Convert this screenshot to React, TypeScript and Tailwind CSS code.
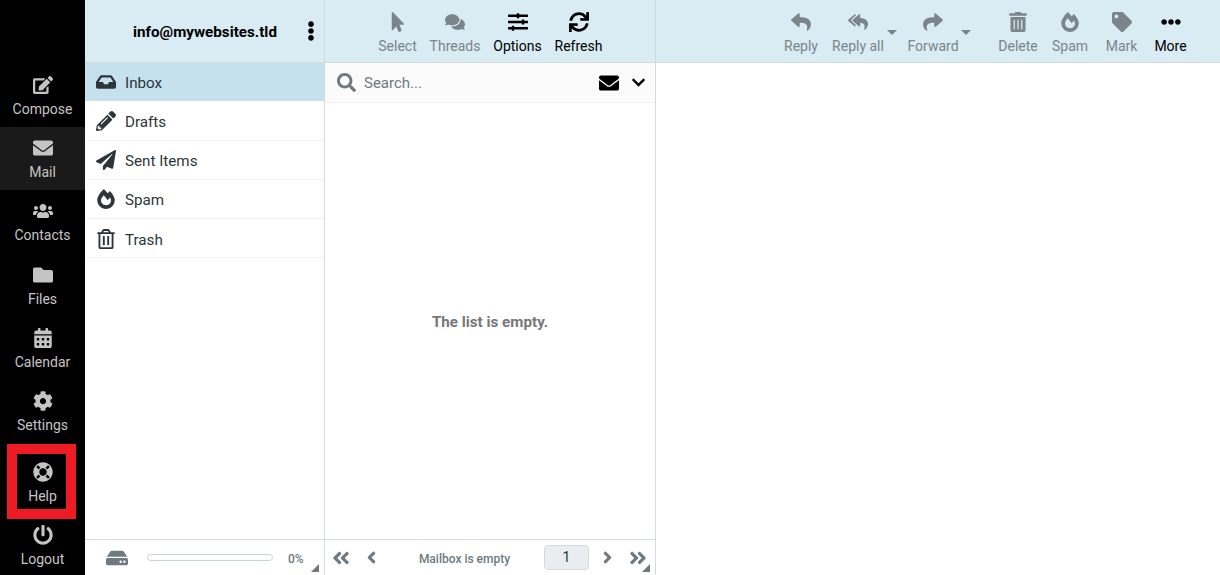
import type { ReactNode } from "react";
import type { IconType } from "react-icons";
import {
  FaAngleDoubleLeft,
  FaAngleDoubleRight,
  FaAngleLeft,
  FaAngleRight,
  FaCalendarAlt,
  FaChevronDown,
  FaCog,
  FaComments,
  FaEdit,
  FaEllipsisH,
  FaEllipsisV,
  FaEnvelope,
  FaFireAlt,
  FaFolder,
  FaHdd,
  FaInbox,
  FaLifeRing,
  FaMousePointer,
  FaPaperPlane,
  FaPencilAlt,
  FaPowerOff,
  FaRegTrashAlt,
  FaReply,
  FaReplyAll,
  FaSearch,
  FaShare,
  FaSlidersH,
  FaSync,
  FaTag,
  FaTrashAlt,
  FaUsers,
} from "react-icons/fa";

const topNav: { label: string; icon: IconType; active?: boolean }[] = [
  { label: "Compose", icon: FaEdit },
  { label: "Mail", icon: FaEnvelope, active: true },
  { label: "Contacts", icon: FaUsers },
  { label: "Files", icon: FaFolder },
  { label: "Calendar", icon: FaCalendarAlt },
  { label: "Settings", icon: FaCog },
];

const folders: { label: string; icon: IconType; active?: boolean }[] = [
  { label: "Inbox", icon: FaInbox, active: true },
  { label: "Drafts", icon: FaPencilAlt },
  { label: "Sent Items", icon: FaPaperPlane },
  { label: "Spam", icon: FaFireAlt },
  { label: "Trash", icon: FaRegTrashAlt },
];

const NavItem = ({
  label,
  icon: Icon,
  active,
}: {
  label: string;
  icon: IconType;
  active?: boolean;
}) => (
  <div
    className={`h-[63.4px] shrink-0 flex flex-col items-center pt-[11px] ${
      active ? "bg-[#1a1a1a]" : ""
    }`}
  >
    <Icon className="h-[20px] w-auto text-[#c4c4c4]" />
    <span className="mt-[4px] text-[14px] leading-[20px] text-[#c4c4c4]">
      {label}
    </span>
  </div>
);

const ToolButton = ({
  label,
  icon: Icon,
  dark,
  width,
  caret,
}: {
  label: string;
  icon: IconType;
  dark?: boolean;
  width: string;
  caret?: boolean;
}) => (
  <div
    className={`relative h-[62px] shrink-0 flex flex-col items-center pt-[12px] ${width} ${
      dark ? "text-black" : "text-[#7b8589]"
    }`}
  >
    <Icon className="h-[20px] w-auto" />
    <span className="mt-[4px] text-[14px] leading-[20px] whitespace-nowrap">
      {label}
    </span>
    {caret && (
      <span className="absolute right-[-13px] top-[30px] border-x-[5px] border-t-[5px] border-x-transparent border-t-[#7b8589]" />
    )}
  </div>
);

const ResizeHandle = () => (
  <svg
    viewBox="0 0 8 8"
    className="absolute right-[5px] bottom-[3px] w-[8px] h-[8px] text-[#777]"
  >
    <path d="M8 0V8H0Z" fill="currentColor" />
  </svg>
);

const Header = ({ children }: { children: ReactNode }) => (
  <div className="h-[63px] shrink-0 bg-[#d9ebf3] border-b border-[#d4dbde] flex items-start">
    {children}
  </div>
);

export default function App() {
  return (
    <div
      className="relative flex h-[575px] w-[1220px] overflow-hidden bg-white"
      style={{ fontFamily: "Roboto, sans-serif" }}
    >
      {/* App menu */}
      <div className="w-[85px] shrink-0 bg-black flex flex-col pt-[63.5px]">
        {topNav.map((item) => (
          <NavItem key={item.label} {...item} />
        ))}
        <div className="mt-[7px] relative">
          <NavItem label="Help" icon={FaLifeRing} />
          <div className="absolute left-[7px] top-[-7px] w-[69px] h-[75px] border-[10px] border-[#ed1c24]" />
        </div>
        <NavItem label="Logout" icon={FaPowerOff} />
      </div>

      {/* Folder list */}
      <div className="w-[240px] shrink-0 border-r border-[#d4dbde] flex flex-col">
        <Header>
          <div className="flex-1 h-full flex items-center">
            <span className="ml-[48px] pt-[2px] text-[15.2px] font-bold text-black">
              info@mywebsites.tld
            </span>
            <FaEllipsisV className="ml-[24px] h-[20px] w-auto text-black" />
          </div>
        </Header>
        <div className="flex-1">
          {folders.map(({ label, icon: Icon, active }) => (
            <div
              key={label}
              className={`h-[39px] last:pt-[2px] flex items-center pl-[10px] border-b ${
                active ? "bg-[#c5e1ee] border-white" : "border-[#f0f2f3]"
              }`}
            >
              <span className="w-[22px] flex justify-center">
                <Icon className="h-[20px] w-auto shrink-0 text-[#2c363a]" />
              </span>
              <span className="ml-[8px] pt-[2px] text-[15.2px] text-[#2c363a]">{label}</span>
            </div>
          ))}
        </div>
        <div className="relative h-[36px] shrink-0 border-t border-[#d4dbde] flex items-center">
          <FaHdd className="ml-[21px] w-[22px] h-[22px] text-[#6e7a80]" />
          <div className="ml-[19px] w-[126px] h-[7px] rounded-full border border-[#c8d3d8]" />
          <span className="ml-[15px] pt-[2px] text-[12px] font-medium text-[#6e7a80]">0%</span>
          <ResizeHandle />
        </div>
      </div>

      {/* Message list */}
      <div className="w-[331px] shrink-0 border-r border-[#d4dbde] flex flex-col">
        <Header>
          <div className="flex pl-[53px] gap-[13px]">
            <ToolButton label="Select" icon={FaMousePointer} width="w-[39px]" />
            <ToolButton label="Threads" icon={FaComments} width="w-[50px]" />
            <ToolButton label="Options" icon={FaSlidersH} dark width="w-[49px]" />
            <ToolButton label="Refresh" icon={FaSync} dark width="w-[47px]" />
          </div>
        </Header>
        <div className="h-[40px] shrink-0 bg-[#fbfbfb] border-b border-[#f0f2f3] flex items-center pl-[12px]">
          <FaSearch className="w-[19px] h-[19px] text-[#6e7a80]" />
          <span className="ml-[8px] pt-[2px] flex-1 text-[15px] text-[#6e7a80]">Search...</span>
          <FaEnvelope className="w-[20px] h-[20px] text-black" />
          <FaChevronDown className="ml-[12px] mr-[9px] h-[15px] w-auto text-black" />
        </div>
        <div className="flex-1 flex items-center justify-center pt-[2px]">
          <span className="text-[15.2px] font-bold text-[#777]">The list is empty.</span>
        </div>
        <div className="relative h-[36px] shrink-0 border-t border-[#d4dbde] flex items-center text-[#6e7a80]">
          <FaAngleDoubleLeft className="ml-[6px] w-[20px] h-[20px]" />
          <FaAngleLeft className="ml-[11px] w-[19px] h-[19px]" />
          <span className="w-[161px] ml-[2px] pl-[2px] pt-[2px] text-center text-[12px] font-medium">
            Mailbox is empty
          </span>
          <span className="w-[45px] h-[25px] rounded-[4px] border border-[#d4dbde] bg-[#e9edf0] flex items-center justify-center text-[14px] text-[#2c363a]">
            1
          </span>
          <FaAngleRight className="ml-[9px] w-[19px] h-[19px]" />
          <FaAngleDoubleRight className="ml-[11px] w-[20px] h-[20px]" />
          <ResizeHandle />
        </div>
      </div>

      {/* Message view */}
      <div className="flex-1 flex flex-col">
        <Header>
          <div className="flex-1 flex justify-end pr-[34px]">
            <ToolButton label="Reply" icon={FaReply} width="w-[34px] mr-[14px]" />
            <ToolButton label="Reply all" icon={FaReplyAll} width="w-[52px] mr-[24px]" caret />
            <ToolButton label="Forward" icon={FaShare} width="w-[50px] mr-[41px]" caret />
            <ToolButton label="Delete" icon={FaTrashAlt} width="w-[38px] mr-[14px]" />
            <ToolButton label="Spam" icon={FaFireAlt} width="w-[38px] mr-[17px]" />
            <ToolButton label="Mark" icon={FaTag} width="w-[31px] mr-[18px]" />
            <ToolButton label="More" icon={FaEllipsisH} dark width="w-[31px]" />
          </div>
        </Header>
      </div>
    </div>
  );
}
